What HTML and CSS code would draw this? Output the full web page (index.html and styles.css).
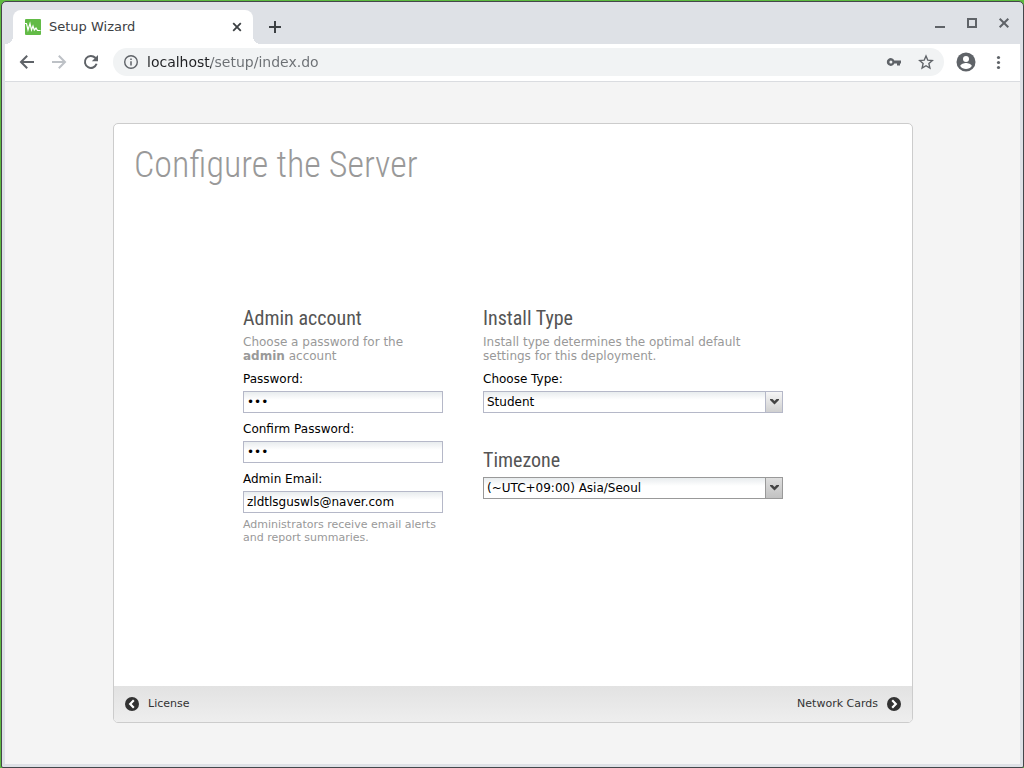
FILE: index.html
```html
<!DOCTYPE html>
<html lang="en">

<head>
    <meta charset="UTF-8">
    <title>Setup Wizard</title>
    <link rel="stylesheet" href="styles.css">
</head>

<body>
    <div class="window">
        <div class="tabstrip">
            <div class="tab">
                <svg class="favicon" width="16" height="16" viewBox="0 0 16 16">
                    <rect width="16" height="16" rx="1" fill="#62bb46"/>
                    <path d="M0 4.500h1.500L3 11l2-6.500L6.500 11 8 7l1.300 4L11 9l1.500 2.500h3" fill="none" stroke="#fff" stroke-width="1.200"/>
                </svg>
                <span class="tab-title">Setup Wizard</span>
                <button class="icon-btn" aria-label="Close tab">
                    <svg width="16" height="16" viewBox="0 0 16 16"><path d="M4.200 4.200l7.600 7.600M11.800 4.200l-7.600 7.600" stroke="#3c4043" stroke-width="1.800"/></svg>
                </button>
            </div>
            <button class="icon-btn new-tab" aria-label="New tab">
                <svg width="16" height="16" viewBox="0 0 16 16"><path d="M8 2v12M2 8h12" stroke="#3c4043" stroke-width="2"/></svg>
            </button>
            <div class="window-controls">
                <button class="icon-btn" aria-label="Minimize">
                    <svg width="16" height="16" viewBox="0 0 16 16"><path d="M3 12h10" stroke="#5f6368" stroke-width="2"/></svg>
                </button>
                <button class="icon-btn" aria-label="Maximize">
                    <svg width="16" height="16" viewBox="0 0 16 16"><path d="M4 4h8v8H4z" fill="none" stroke="#5f6368" stroke-width="2"/></svg>
                </button>
                <button class="icon-btn" aria-label="Close">
                    <svg width="16" height="16" viewBox="0 0 16 16"><path d="M3.700 3.700l8.600 8.600M12.300 3.700l-8.600 8.600" stroke="#5f6368" stroke-width="2"/></svg>
                </button>
            </div>
        </div>

        <div class="toolbar">
            <button class="icon-btn" aria-label="Back">
                <svg width="16" height="16" viewBox="0 0 16 16"><path d="M15 8H2.500M8.200 1.800L2 8l6.200 6.200" fill="none" stroke="#5f6368" stroke-width="2"/></svg>
            </button>
            <button class="icon-btn" aria-label="Forward">
                <svg width="16" height="16" viewBox="0 0 16 16"><path d="M1 8h12.500M7.800 1.800L14 8l-6.200 6.200" fill="none" stroke="#bdc1c6" stroke-width="2"/></svg>
            </button>
            <button class="icon-btn" aria-label="Reload">
                <svg width="16" height="16" viewBox="0 0 16 16"><path d="M13.600 9.800A6 6 0 1 1 12.300 3.800L13.500 5" fill="none" stroke="#5f6368" stroke-width="2"/><path d="M15 1v6.200H8.800z" fill="#5f6368"/></svg>
            </button>
            <div class="omnibox">
                <svg width="16" height="16" viewBox="0 0 16 16"><circle cx="8" cy="8" r="6.300" fill="none" stroke="#5f6368" stroke-width="1.400"/><path d="M8 7.200v4.300M8 4.400v1.600" stroke="#5f6368" stroke-width="1.500"/></svg>
                <input class="url" type="text" value="localhost/setup/index.do" aria-label="Address">
                <button class="icon-btn" aria-label="Saved passwords">
                    <svg width="16" height="16" viewBox="0 0 16 16"><path fill="#5f6368" fill-rule="evenodd" d="M8.300 6.500H15V9.500H14V11.500H11V9.500H8.300A3.900 3.900 0 1 1 8.300 6.500zM4.900 6.500a1.500 1.500 0 1 0 0 3 1.500 1.500 0 0 0 0-3z"/></svg>
                </button>
                <button class="icon-btn" aria-label="Bookmark this page">
                    <svg width="16" height="16" viewBox="0 0 16 16"><path d="M8 2l1.800 4.200 4.500.4-3.400 3 1 4.400L8 11.700 4.100 14l1-4.400-3.400-3 4.500-.4z" fill="none" stroke="#5f6368" stroke-width="1.400"/></svg>
                </button>
            </div>
            <button class="icon-btn profile" aria-label="Profile">
                <svg width="20" height="20" viewBox="0 0 20 20"><circle cx="10" cy="10" r="9.500" fill="#5f6368"/><circle cx="10" cy="7" r="3" fill="#fff"/><path d="M4.200 14c.4-2 3.800-3 5.800-3s5.400 1 5.800 3a7 7 0 0 1-11.600 0z" fill="#fff"/></svg>
            </button>
            <button class="icon-btn" aria-label="Menu">
                <svg width="16" height="16" viewBox="0 0 16 16" fill="#5f6368"><circle cx="8.500" cy="3.500" r="1.600"/><circle cx="8.500" cy="8.500" r="1.600"/><circle cx="8.500" cy="13.500" r="1.600"/></svg>
            </button>
        </div>

        <main class="page">
            <form class="wizard">
                <h1>Configure the Server</h1>
                <div class="columns">
                    <section class="account">
                        <h2>Admin account</h2>
                        <p class="intro">Choose a password for the <b>admin</b> account</p>
                        <div class="field">
                            <label for="password">Password:</label>
                            <input id="password" class="box" type="password" value="abc">
                        </div>
                        <div class="field">
                            <label for="confirm">Confirm Password:</label>
                            <input id="confirm" class="box" type="password" value="abc">
                        </div>
                        <div class="field">
                            <label for="email">Admin Email:</label>
                            <input id="email" class="box" type="text" value="zldtlsguswls@naver.com">
                        </div>
                        <p class="hint">Administrators receive email alerts and report summaries.</p>
                    </section>
                    <div class="settings">
                        <section>
                            <h2>Install Type</h2>
                            <p class="intro">Install type determines the optimal default settings for this deployment.</p>
                            <div class="field">
                                <label for="type">Choose Type:</label>
                                <div class="combo">
                                    <select id="type" class="box">
                                        <option>Student</option>
                                    </select>
                                    <span class="trigger"><svg width="9" height="6" viewBox="0 0 9 6"><path d="M0 0h2.500l2 2 2-2H9v1L4.500 5.500 0 1z" fill="#444"/></svg></span>
                                </div>
                            </div>
                        </section>
                        <section>
                            <h2 id="tz-title">Timezone</h2>
                            <div class="combo combo-active">
                                <select class="box" aria-labelledby="tz-title">
                                    <option>(~UTC+09:00) Asia/Seoul</option>
                                </select>
                                <span class="trigger"><svg width="9" height="6" viewBox="0 0 9 6"><path d="M0 0h2.500l2 2 2-2H9v1L4.500 5.500 0 1z" fill="#444"/></svg></span>
                            </div>
                        </section>
                    </div>
                </div>
                <div class="footer">
                    <button type="button" class="nav-btn">
                        <svg width="16" height="16" viewBox="0 0 16 16"><circle cx="8" cy="8" r="7" fill="#333"/><path d="M9.800 4.300L6.200 8l3.600 3.700" fill="none" stroke="#fff" stroke-width="2.200"/></svg>
                        <span>License</span>
                    </button>
                    <button type="button" class="nav-btn">
                        <span>Network Cards</span>
                        <svg width="16" height="16" viewBox="0 0 16 16"><circle cx="8" cy="8" r="7" fill="#333"/><path d="M6.200 4.300L9.800 8l-3.600 3.700" fill="none" stroke="#fff" stroke-width="2.200"/></svg>
                    </button>
                </div>
            </form>
        </main>
    </div>
</body>

</html>
```

FILE: styles.css
```css
* {
    box-sizing: border-box;
}

body {
    margin: 0;
    padding: 1px 0 0 1px;
    height: 100vh;
    background-color: #5dbb3f;
    font-family: "DejaVu Sans", Verdana, sans-serif;
    font-size: 12px;
    line-height: 14px;
}

h1,
h2,
p {
    margin: 0;
}

svg {
    display: block;
}

.window {
    display: flex;
    flex-direction: column;
    height: 100%;
    padding: 0 3px 3px;
    background-color: #dee1e6;
    border: 1px solid #44474b;
    border-radius: 5px 5px 2px 2px;
}

.icon-btn {
    flex: none;
    padding: 0;
    border: none;
    background: none;
    cursor: pointer;
}

/* tabs */
.tabstrip {
    display: flex;
    align-items: flex-end;
    height: 42px;
}

.tab {
    display: flex;
    align-items: center;
    position: relative;
    width: 240px;
    height: 34px;
    margin-left: 8px;
    padding: 0 8px 0 12px;
    background-color: #fff;
    border-radius: 8px 8px 0 0;
}

.tab::before,
.tab::after {
    content: "";
    position: absolute;
    bottom: 0;
    width: 8px;
    height: 8px;
}

.tab::before {
    right: 100%;
    background: radial-gradient(circle at 0 0, transparent 8px, #fff 8px);
}

.tab::after {
    left: 100%;
    background: radial-gradient(circle at 100% 0, transparent 8px, #fff 8px);
}

.tab-title {
    flex: 1;
    margin-left: 8px;
    font-size: 13px;
    color: #3c4043;
}

.new-tab {
    align-self: center;
    margin: 8px 0 0 14px;
}

.window-controls {
    display: flex;
    align-self: center;
    gap: 16px;
    margin-left: auto;
    padding-right: 8px;
}

/* toolbar */
.toolbar {
    display: flex;
    align-items: center;
    gap: 16px;
    height: 38px;
    padding: 0 14px 1px;
    background-color: #fff;
    border-bottom: 1px solid #dadce0;
}

.omnibox {
    display: flex;
    flex: 1;
    align-items: center;
    gap: 16px;
    height: 28px;
    margin-left: -2px;
    padding: 0 10px;
    background-color: #f1f3f4;
    border-radius: 14px;
}

.url {
    flex: 1;
    min-width: 0;
    margin-left: -8px;
    padding: 0;
    border: none;
    outline: none;
    font: 14px "DejaVu Sans", Verdana, sans-serif;
    /* the host is darker than the path */
    color: transparent;
    background: linear-gradient(to right, #202124 64px, #6b6f73 64px);
    -webkit-background-clip: text;
    background-clip: text;
}

.profile {
    margin: 0 -2px 0 -4px;
}

/* page */
.page {
    display: flex;
    flex: 1;
    align-items: center;
    justify-content: center;
    padding-left: 1px;
    background-color: #f4f4f4;
}

.wizard {
    display: flex;
    flex-direction: column;
    width: 800px;
    max-width: 100%;
    min-height: 600px;
    background-color: #fff;
    border: 1px solid #ccc;
    border-radius: 5px;
    overflow: hidden;
}

h1 {
    padding: 20px 20px 0;
    font: 300 36px/42px "Roboto Condensed", Roboto, sans-serif;
    color: #999;
}

h2 {
    font: 400 20px/24px "Roboto Condensed", Roboto, sans-serif;
    color: #555;
}

.columns {
    display: flex;
    flex: 1;
    justify-content: center;
    gap: 40px;
    padding-top: 120px;
}

.account {
    width: 200px;
}

.settings {
    display: flex;
    flex-direction: column;
    gap: 35px;
    width: 300px;
}

.intro {
    margin: 5px 0 9px;
    color: #999;
}

.field + .field {
    margin-top: 9px;
}

.field label {
    display: block;
    margin-bottom: 5px;
    color: #000;
}

.box {
    display: block;
    width: 100%;
    height: 22px;
    padding: 0 3px;
    border: 1px solid #b5b8c8;
    border-radius: 0;
    outline: none;
    appearance: none;
    font: 12px "DejaVu Sans", Verdana, sans-serif;
    color: #000;
    background: #fff linear-gradient(#e8ecee, #fff 8px);
}

.hint {
    margin-top: 5px;
    font-size: 11px;
    line-height: 13px;
    color: #999;
}

.combo {
    position: relative;
}

.trigger {
    display: flex;
    align-items: center;
    justify-content: center;
    position: absolute;
    top: 1px;
    right: 1px;
    width: 17px;
    height: 20px;
    padding-bottom: 1px;
    border-left: 1px solid #b5b8c8;
    background: linear-gradient(#f6f6f6, #d0d0d0);
    pointer-events: none;
}

.combo-active {
    margin-top: 5px;
}

.combo-active .box,
.combo-active .trigger {
    border-color: #999;
}

.combo-active .trigger {
    background: linear-gradient(#dedede, #c2c2c2);
}

.footer {
    display: flex;
    justify-content: space-between;
    height: 36px;
    padding: 0 10px;
    background: linear-gradient(#e2e2e2, #eee);
}

.nav-btn {
    display: flex;
    align-items: center;
    gap: 8px;
    padding: 0;
    border: none;
    background: none;
    font: 11px "DejaVu Sans", Verdana, sans-serif;
    color: #333;
    cursor: pointer;
}

.nav-btn span {
    padding-bottom: 2px;
}
```
